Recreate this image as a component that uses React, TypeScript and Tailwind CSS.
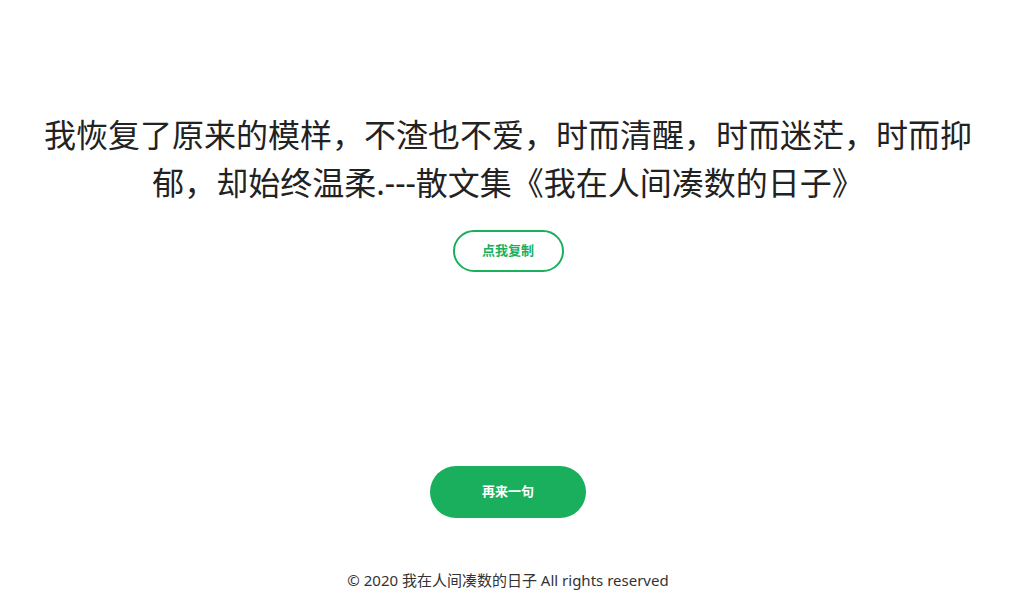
import React, { useState } from "react";

const quotes = [
  "我恢复了原来的模样，不渣也不爱，时而清醒，时而迷茫，时而抑郁，却始终温柔.---散文集《我在人间凑数的日子》",
];

export default function App() {
  const [index, setIndex] = useState(0);

  const copy = () => {
    try {
      navigator.clipboard?.writeText(quotes[index]);
    } catch {
      // ignore
    }
  };

  return (
    <div
      className="flex min-h-[615px] flex-col items-center bg-white pr-[9px] text-[#222]"
      style={{ fontFamily: '"Noto Sans", "Noto Sans CJK SC", sans-serif' }}
    >
      <p className="mt-[111px] w-[945px] text-center text-[32px] leading-[48px] text-[#222]">
        {quotes[index]}
      </p>

      <button
        type="button"
        onClick={copy}
        className="mt-[23px] h-[42px] w-[111px] rounded-full border-2 border-[#1aaf5d] bg-white text-[13px] font-bold text-[#1aaf5d]"
      >
        点我复制
      </button>

      <button
        type="button"
        onClick={() => setIndex((i) => (i + 1) % quotes.length)}
        className="mt-[194px] h-[52px] w-[156px] rounded-full bg-[#1aaf5d] text-[13px] font-bold text-white"
      >
        再来一句
      </button>

      <footer className="mt-[52px] text-[15px] leading-[20px] text-[#333]">
        © 2020 我在人间凑数的日子 All rights reserved
      </footer>
    </div>
  );
}
